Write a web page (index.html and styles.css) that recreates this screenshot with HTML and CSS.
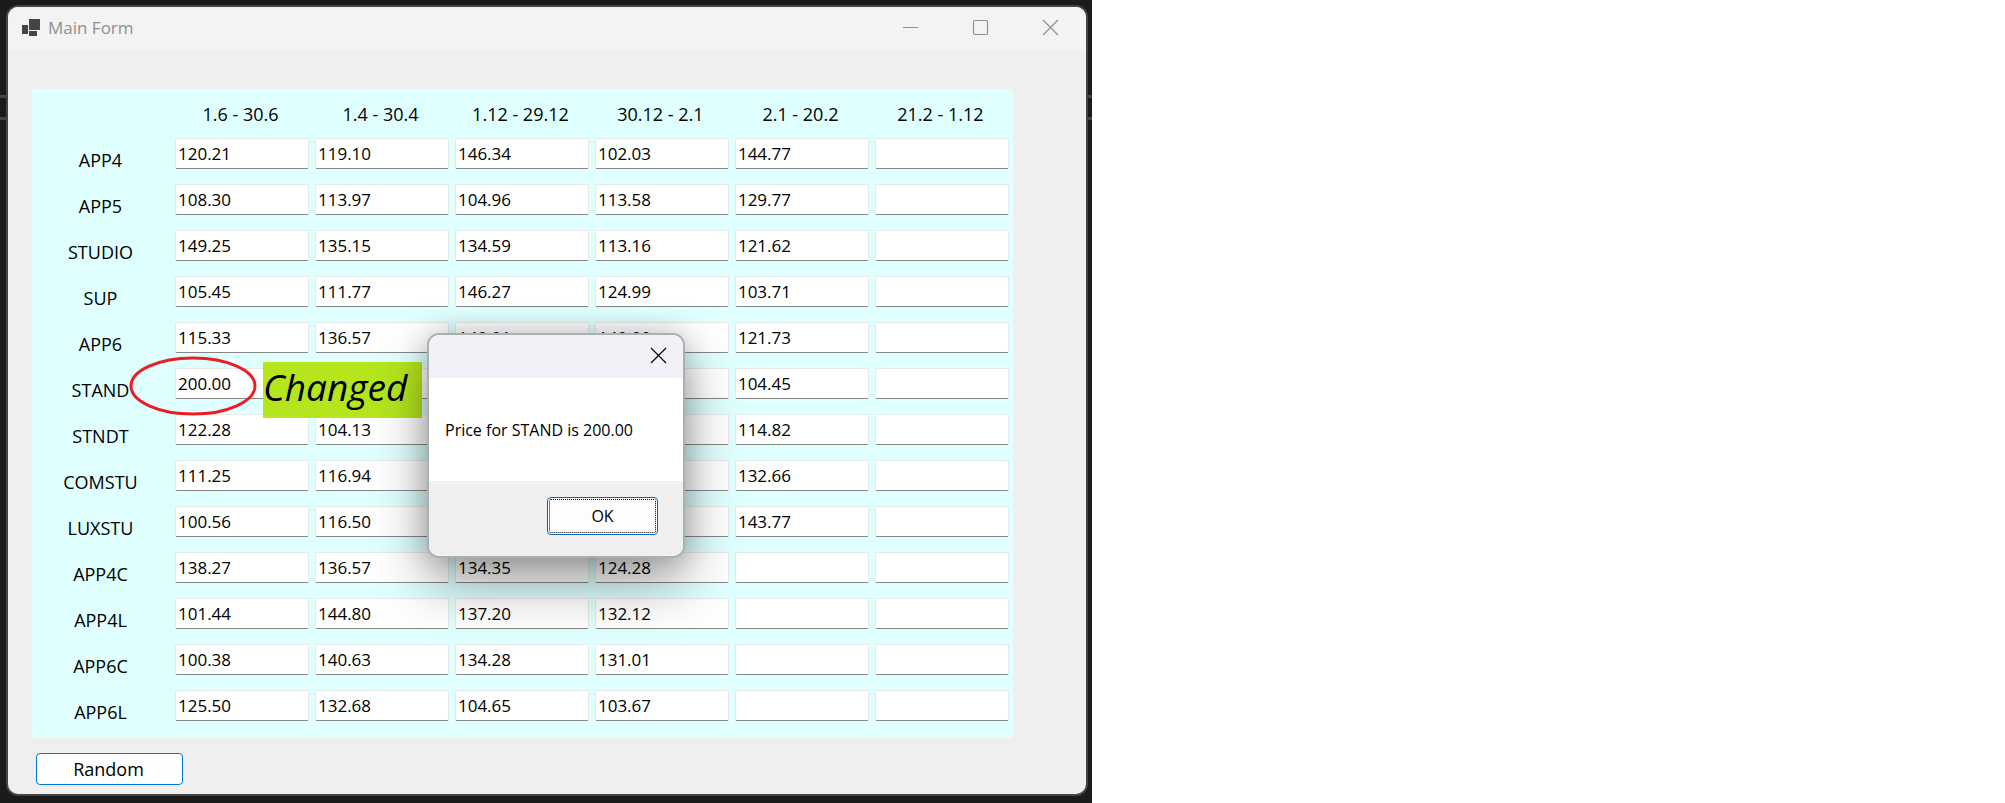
FILE: index.html
```html
<!DOCTYPE html>
<html lang="en">
<head>
<meta charset="utf-8">
<title>Main Form</title>
<link rel="stylesheet" href="styles.css">
</head>
<body>
<main class="desktop">
  <section class="window" aria-label="Main Form">
    <header class="titlebar">
      <svg class="app-icon" viewBox="0 0 20 18" aria-hidden="true">
        <rect x="8" y="0" width="11" height="11"/>
        <rect x="1" y="6" width="6" height="9"/>
        <rect x="8" y="12" width="8" height="5"/>
      </svg>
      <h1 class="window-title">Main Form</h1>
      <button class="caption-button" aria-label="Minimize"><svg class="caption-icon" viewBox="0 0 17 17"><path d="M1 8.500H16"/></svg></button>
      <button class="caption-button" aria-label="Maximize"><svg class="caption-icon" viewBox="0 0 17 17"><rect x="1.500" y="1.500" width="14" height="14" rx="1.500"/></svg></button>
      <button class="caption-button" aria-label="Close"><svg class="caption-icon" viewBox="0 0 17 17"><path d="M1 1L16 16M16 1L1 16"/></svg></button>
    </header>
    <div class="client">
      <div class="panel">
        <table class="prices">
          <thead><tr id="periods"><td></td></tr></thead>
          <tbody id="rows"></tbody>
        </table>
        <svg class="ring" viewBox="0 0 128 60" aria-hidden="true"><ellipse cx="64" cy="30" rx="62" ry="28"/></svg>
        <p class="note">Changed</p>
      </div>
      <button class="random">Random</button>
    </div>
  </section>
  <section class="message" role="dialog" aria-labelledby="message-text">
    <div class="message-bar">
      <button class="message-close" aria-label="Close"><svg class="caption-icon" viewBox="0 0 17 17"><path d="M1 1L16 16M16 1L1 16"/></svg></button>
    </div>
    <p class="message-text" id="message-text">Price for STAND is 200.00</p>
    <div class="message-footer"><button class="ok">OK</button></div>
  </section>
</main>
<script src="app.js"></script>
</body>
</html>
```
FILE: styles.css
```css
* { box-sizing: border-box; }

body {
  margin: 0;
  background: #fff;
  color: #000;
  font-family: "Open Sans", "Noto Sans", sans-serif;
  font-size: 17px;
  line-height: 24px;
}

button, input { font: inherit; color: inherit; }
svg { display: block; }

.desktop {
  position: relative;
  width: 54.46%;
  min-width: 800px;
  min-height: 100vh;
  padding: 5px 4px 7px 6px;
  background:
    linear-gradient(#444, #444) 0 95px / 100% 3px no-repeat,
    linear-gradient(#444, #444) 0 117px / 100% 3px no-repeat,
    #1b1b1b;
}

.window {
  border: 2px solid #444;
  border-radius: 12px;
  background: #efefef;
  overflow: hidden;
}

.titlebar {
  display: flex;
  align-items: center;
  height: 43px;
  padding: 0 0 2px 13px;
  background: #f3f3f3;
}

.app-icon { width: 20px; height: 18px; fill: #444; }

.window-title {
  flex: 1;
  margin: 0 0 0 7px;
  color: #8f8f8f;
  font-size: 17px;
  font-weight: 400;
}

.caption-button {
  display: grid;
  place-items: center;
  width: 70px;
  height: 41px;
  padding: 0;
  border: 0;
  background: none;
  color: #8f8f8f;
}

.caption-icon { width: 17px; height: 17px; fill: none; stroke: currentColor; stroke-width: 1.2; }

.client { padding: 39px 73px 9px 24px; }

.panel { position: relative; padding: 0 1px 5px 0; background: #e0ffff; }

.prices { width: 100%; table-layout: fixed; border-collapse: collapse; }
.prices th, .prices td { height: 46px; padding: 3px; font-weight: 400; vertical-align: top; text-align: center; }
.prices th { padding: 13px 6px 0 3px; font-size: 18px; }

.price {
  display: block;
  width: 100%;
  height: 31px;
  padding: 0 2px 1px;
  border: 1px solid #e8e8e8;
  border-bottom-color: #868686;
  border-radius: 2px;
  background: #fff;
}

.ring {
  position: absolute;
  left: 97px;
  top: 267px;
  width: 128px;
  height: 60px;
  fill: none;
  stroke: #ed1c24;
  stroke-width: 3;
}

.note {
  position: absolute;
  left: 231px;
  top: 273px;
  width: 159px;
  height: 56px;
  margin: 0;
  background: #b5e61d;
  font-size: 37px;
  font-style: italic;
  line-height: 50px;
}

.random {
  display: block;
  width: 147px;
  height: 32px;
  margin: 15px 0 0 4px;
  padding: 0 2px 0 0;
  border: 1px solid #0078d4;
  border-radius: 4px;
  background: #fdfdfd;
  font-size: 18px;
}

.message {
  position: absolute;
  left: 427px;
  top: 333px;
  width: 258px;
  border: 2px solid #a9b0b0;
  border-radius: 12px;
  background: #fff;
  box-shadow: 0 26px 56px rgba(0, 0, 0, .36), 0 0 28px rgba(0, 0, 0, .2);
  font-size: 16px;
  overflow: hidden;
}

.message-bar { display: flex; justify-content: flex-end; height: 43px; background: #f3f0f8; }

.message-close {
  display: grid;
  place-items: center;
  width: 50px;
  height: 41px;
  padding: 0;
  border: 0;
  background: none;
}

.message-text { margin: 0; padding: 40px 16px 39px; }

.message-footer { display: flex; justify-content: flex-end; padding: 16px 25px 21px; background: #efefef; }

.ok {
  width: 111px;
  height: 38px;
  padding: 0;
  border: 1px solid #0067c0;
  border-radius: 4px;
  outline: 1px dotted #000;
  outline-offset: -3px;
  background: #fdfdfd;
}
```
FILE: app.js
```js
const periods = ["1.6 - 30.6", "1.4 - 30.4", "1.12 - 29.12", "30.12 - 2.1", "2.1 - 20.2", "21.2 - 1.12"];

const apartments = [
  ["APP4", "120.21", "119.10", "146.34", "102.03", "144.77", ""],
  ["APP5", "108.30", "113.97", "104.96", "113.58", "129.77", ""],
  ["STUDIO", "149.25", "135.15", "134.59", "113.16", "121.62", ""],
  ["SUP", "105.45", "111.77", "146.27", "124.99", "103.71", ""],
  ["APP6", "115.33", "136.57", "140.01", "140.00", "121.73", ""],
  ["STAND", "200.00", "", "", "", "104.45", ""],
  ["STNDT", "122.28", "104.13", "", "", "114.82", ""],
  ["COMSTU", "111.25", "116.94", "", "", "132.66", ""],
  ["LUXSTU", "100.56", "116.50", "", "", "143.77", ""],
  ["APP4C", "138.27", "136.57", "134.35", "124.28", "", ""],
  ["APP4L", "101.44", "144.80", "137.20", "132.12", "", ""],
  ["APP6C", "100.38", "140.63", "134.28", "131.01", "", ""],
  ["APP6L", "125.50", "132.68", "104.65", "103.67", "", ""]
];

const headRow = document.getElementById("periods");
for (const period of periods) {
  const th = document.createElement("th");
  th.scope = "col";
  th.textContent = period;
  headRow.append(th);
}

const body = document.getElementById("rows");
for (const [name, ...prices] of apartments) {
  const row = body.insertRow();
  const th = document.createElement("th");
  th.scope = "row";
  th.textContent = name;
  row.append(th);
  prices.forEach((price, i) => {
    const input = document.createElement("input");
    input.className = "price";
    input.type = "text";
    input.value = price;
    input.setAttribute("aria-label", `${name}, ${periods[i]}`);
    row.insertCell().append(input);
  });
}
```
